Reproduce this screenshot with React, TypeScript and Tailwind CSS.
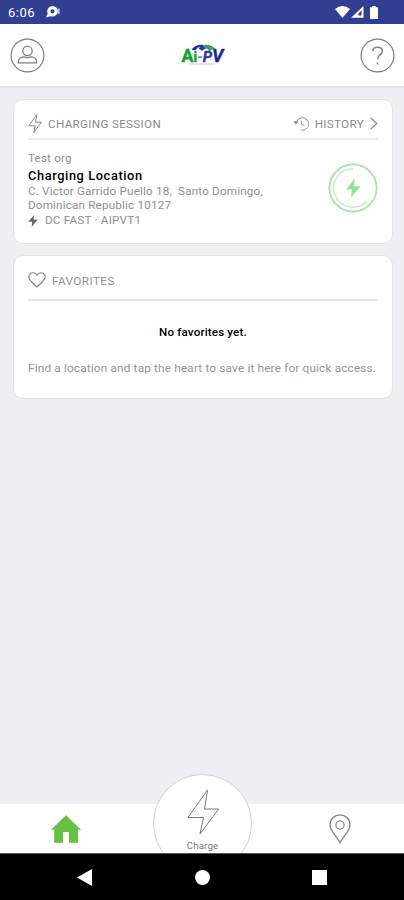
import type { ReactNode } from "react";

function BoltOutline({ className }: { className?: string }) {
  return (
    <svg viewBox="0 0 32 46" className={className} fill="none" stroke="currentColor" strokeLinejoin="round">
      <path d="M20.5 1 L1 28.5 H16.5 L13 45 L31.5 20 H17.5 Z" vectorEffect="non-scaling-stroke" />
    </svg>
  );
}

function BoltSolid({ className }: { className?: string }) {
  return (
    <svg viewBox="0 0 14 18" className={className} fill="currentColor">
      <path d="M8.5 0 L0 10.2 H5.8 L5 18 L14 7 H8 Z" />
    </svg>
  );
}

function Logo() {
  return (
    <svg width="44" height="22" viewBox="0 0 44 22" role="img" aria-label="AI-PV">
      <path d="M10.5 6 C13 1.4 18 0.2 23 0.8 L21 3 L17 3.4 L14.5 6.2 Z" fill="#2a2fa0" />
      <path d="M17.5 4.5 L22 1.2 L25.5 4 L21 6.8 Z" fill="#3137a5" />
      <path d="M23 1 C28 0.3 32.5 2.2 35 6 L31 5.6 L28.5 7.4 L26.5 5 L23.5 4 Z" fill="#35a551" />
      <text
        x="0.5"
        y="17.6"
        fontFamily="Roboto, sans-serif"
        fontWeight="700"
        fontSize="18"
        strokeWidth="0.4"
        textLength="42"
        lengthAdjust="spacingAndGlyphs"
      >
        <tspan fill="#16a02c" stroke="#16a02c">A</tspan>
        <tspan fill="#16a02c" stroke="#16a02c" fontSize="14">i</tspan>
        <tspan fill="#3fab4c" fontSize="14">-</tspan>
        <tspan fill="#3534ae" stroke="#3534ae" fontSize="15" fontStyle="italic">P</tspan>
        <tspan fill="#231f9d" stroke="#231f9d" fontStyle="italic">V</tspan>
      </text>
      <path d="M8.5 20 H33.5" stroke="#b9b4de" strokeWidth="1" strokeDasharray="2 .6" />
    </svg>
  );
}

function StatusBar() {
  return (
    <div className="flex h-6 shrink-0 items-center bg-[#323e91] pl-[8px] pr-[26px] text-white">
      <span className="w-[38px] pt-px text-[13px] leading-6 tracking-[0.5px]">6:06</span>
      <svg width="15" height="14" viewBox="0 0 15 14" fill="none">
        <circle cx="6.5" cy="6.3" r="3.7" stroke="white" strokeWidth="3.2" />
        <path d="M0 12.5 L2 8 L5 11 Z" fill="white" />
        <path d="M12.7 3.5 V9" stroke="#b9c4ed" strokeWidth="2" />
      </svg>
      <div className="ml-auto flex items-center">
        <svg width="15" height="12" viewBox="0 0 15 12" fill="white">
          <path d="M0 3 Q7.5 -3 15 3 L7.5 12 Z" />
        </svg>
        <svg width="13" height="12" viewBox="0 0 13 12" className="ml-[1px]">
          <path d="M0 11.8 L12.5 0 V11.8 Z" fill="white" />
          <path d="M7.5 9.5 V7.5 L10.5 4.5 V9.5 Z" fill="#323e91" />
        </svg>
        <svg width="8" height="13" viewBox="0 0 8 13" className="ml-[6px]" fill="white">
          <path d="M2.2 0 H5.8 V1.2 H8 V13 H0 V1.2 H2.2 Z" />
        </svg>
      </div>
    </div>
  );
}

function Header() {
  return (
    <header className="flex h-[63px] shrink-0 items-center justify-between border-b border-[#e4e4e6] bg-white pl-[10px] pr-[9px] pt-px shadow-[0_1px_1px_rgba(0,0,0,0.04)]">
      <button aria-label="Profile">
        <svg width="35" height="35" viewBox="0 0 35 35" fill="none" stroke="#7d7d7d" strokeWidth="1.2">
          <circle cx="17.5" cy="17.5" r="16.4" />
          <circle cx="17.5" cy="12.9" r="4.7" />
          <path d="M8.3 24.8 C8.3 20.4 11 18.9 14 18.9 Q17.5 20.2 21 18.9 C24 18.9 26.7 20.4 26.7 24.8 Z" strokeLinejoin="round" />
        </svg>
      </button>
      <div className="-mt-[1px]">
        <Logo />
      </div>
      <button aria-label="Help">
        <svg width="35" height="35" viewBox="0 0 35 35" fill="none" stroke="#7d7d7d" strokeWidth="1.2">
          <circle cx="17.5" cy="17.5" r="16.4" />
          <path d="M12.8 13.3 C12.8 7.8 22.4 7.8 22.4 13.3 C22.4 16.8 17.5 16.7 17.5 21.3" strokeWidth="1.5" />
          <path d="M17.5 24.6 V26.5" strokeWidth="1.6" />
        </svg>
      </button>
    </header>
  );
}

function Card({ className, children }: { className: string; children: ReactNode }) {
  return (
    <section className={`rounded-[10px] border border-[#e3e3e6] bg-white px-[14px] ${className}`}>
      {children}
    </section>
  );
}

function ChargingSession() {
  return (
    <Card className="h-[145px]">
      <div className="flex h-[40px] items-center border-b-2 border-[#ebebeb] pt-[9px] text-[#8b8b8b]">
        <BoltOutline className="h-[19px] w-[14px]" />
        <h2 className="ml-[6px] pt-px text-[11.7px] leading-4 tracking-[0.3px]">CHARGING SESSION</h2>
        <button className="ml-auto flex items-center">
          <svg width="17" height="16" viewBox="0 0 17 16" fill="none" stroke="currentColor" strokeWidth="1">
            <path d="M3.2 6.5 A6.3 6.3 0 0 1 14.2 4" />
            <path d="M14.2 4 A6.3 6.3 0 0 1 7 13.8" strokeDasharray="3 .8" />
            <path d="M.3 5 L5.8 5.8 L2.5 8.5 Z" fill="currentColor" stroke="none" />
            <path d="M8.3 4.8 V8 L11.3 9.5" />
          </svg>
          <span className="ml-[5px] pt-px text-[11.7px] leading-4 tracking-[0.3px]">HISTORY</span>
          <svg width="8" height="13" viewBox="0 0 8 13" className="ml-[6px]" fill="none" stroke="currentColor" strokeWidth="1.2">
            <path d="M.8 1 L6.8 6.5 L.8 12" />
          </svg>
        </button>
      </div>
      <div className="flex justify-between pt-[10px] text-[11.7px] tracking-[0.16px] text-[#8f8f8f]">
        <div>
          <p className="leading-4">Test org</p>
          <h3 className="mt-[2px] text-[12.8px] font-medium leading-4 tracking-[0.6px] text-black">Charging Location</h3>
          <p className="whitespace-pre leading-[14px] tracking-[0.17px]">{"C. Victor Garrido Puello 18,  Santo Domingo,\nDominican Republic 10127"}</p>
          <p className="flex items-center leading-[17px] tracking-[0.2px]">
            <BoltSolid className="mr-[7px] h-[12px] w-[10px] text-[#666]" />
            DC FAST · AIPVT1
          </p>
        </div>
        <svg width="50" height="50" viewBox="0 0 50 50" className="mt-[13px]" fill="none">
          <circle cx="25" cy="25" r="23.6" stroke="#a2e5a5" strokeWidth="1.8" />
          <path d="M25 5.8 A19.2 19.2 0 1 0 38.5 38.5" stroke="#c3edc4" strokeWidth="1.4" />
          <path d="M26.8 15.5 L18 26.5 H23.7 L23 34.5 L32.4 23.2 H26 Z" fill="#93e297" />
        </svg>
      </div>
    </Card>
  );
}

function Favorites() {
  return (
    <Card className="mt-[11px] h-[144px]">
      <div className="flex h-[45px] items-center border-b-2 border-[#e5e5e5] pt-[5px] text-[#929292]">
        <svg width="18" height="16" viewBox="0 0 18 16" fill="none" stroke="#858585" strokeWidth="1.1">
          <path d="M9 3.3 C7.2 -.1 3 .1 1.4 2.8 C-.4 6 2.3 9 9 15 C15.7 9 18.4 6 16.6 2.8 C15 .1 10.8 -.1 9 3.3 Z" />
        </svg>
        <h2 className="ml-[6px] pt-px text-[11.7px] leading-4 tracking-[0.45px]">FAVORITES</h2>
      </div>
      <p className="mt-[23px] text-center text-[11.6px] font-medium leading-4 tracking-[0.16px] text-black">No favorites yet.</p>
      <p className="mt-[20px] whitespace-nowrap text-[11.8px] leading-4 tracking-[0.16px] text-[#949494]">
        Find a location and tap the heart to save it here for quick access.
      </p>
    </Card>
  );
}

function TabBar() {
  return (
    <nav className="relative flex h-[49px] shrink-0 items-center justify-between bg-white pl-[51px] pr-[53px]">
      <button aria-label="Home">
        <svg width="30" height="28" viewBox="0 0 30 28" fill="#65c044">
          <path d="M15 .3 L30 14.7 H27 V27.7 H18 V17 H12 V27.7 H3.2 V14.7 H0 Z" />
        </svg>
      </button>
      {/* the charge button sticks out above the bar and is cut off at its lower edge */}
      <div className="absolute bottom-0 left-[153px] h-[79px] w-[99px] overflow-hidden">
        <button className="flex h-[99px] w-[99px] flex-col items-center rounded-full border border-[#d2d2d2] bg-white text-[#777]">
          <BoltOutline className="mt-[14px] h-[46px] w-[32px]" />
          <span className="mt-[5px] text-[9.6px] leading-3 tracking-[0.2px]">Charge</span>
        </button>
      </div>
      <button aria-label="Map">
        <svg width="22" height="30" viewBox="0 0 22 30" fill="none" stroke="#858585" strokeWidth="1.3">
          <path d="M11 28.7 C8 22.5 1 17.5 1 10.6 A10 9.8 0 0 1 21 10.6 C21 17.5 14 22.5 11 28.7 Z" />
          <circle cx="11" cy="11" r="4.1" />
        </svg>
      </button>
    </nav>
  );
}

function SystemNav() {
  return (
    <div className="flex h-[47px] shrink-0 items-center justify-between border-t border-[#555] bg-black pl-[77px] pr-[77px]">
      <svg width="15" height="17" viewBox="0 0 15 17" fill="white">
        <path d="M15 0 V17 L0 8.5 Z" />
      </svg>
      <span className="h-[15px] w-[15px] rounded-full bg-white" />
      <span className="h-[15px] w-[15px] bg-white" />
    </div>
  );
}

export default function App() {
  return (
    <div className="flex h-[900px] w-[404px] flex-col overflow-hidden bg-[#efeef3] font-['Roboto',sans-serif]">
      <StatusBar />
      <Header />
      <main className="flex-1 pl-[13px] pr-[11px] pt-[12px]">
        <ChargingSession />
        <Favorites />
      </main>
      <TabBar />
      <SystemNav />
    </div>
  );
}
